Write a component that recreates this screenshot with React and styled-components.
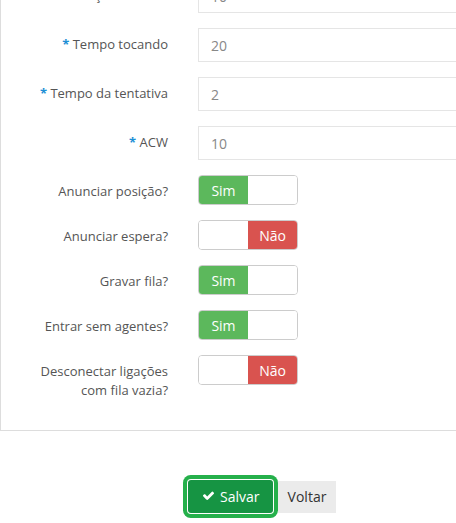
import React, { useState } from 'react';
import styled, { createGlobalStyle } from 'styled-components';

const GlobalStyle = createGlobalStyle`
  html, body {
    margin: 0;
    padding: 0;
    background: #fff;
    overflow: hidden;
    font-family: "Open Sans", "Noto Sans", sans-serif;
  }
`;

const fields = [
  { label: 'Posição máxima', value: '10' },
  { label: 'Tempo tocando', value: '20' },
  { label: 'Tempo da tentativa', value: '2' },
  { label: 'ACW', value: '10' },
];

const initialToggles = [
  { label: 'Anunciar posição?', on: true },
  { label: 'Anunciar espera?', on: false },
  { label: 'Gravar fila?', on: true },
  { label: 'Entrar sem agentes?', on: true },
  { label: 'Desconectar ligações com fila vazia?', on: false, wrap: true },
];

const App = () => {
  const [toggles, setToggles] = useState(initialToggles);

  const flip = (i) => {
    setToggles(toggles.map((t, idx) => (idx === i ? { ...t, on: !t.on } : t)));
  };

  return (
    <Page>
      <GlobalStyle />
      <Panel>
        {fields.map((f) => (
          <Row key={f.label}>
            <Label>
              <Req>*</Req> {f.label}
            </Label>
            <Input defaultValue={f.value} />
          </Row>
        ))}
        {toggles.map((t, i) => (
          <Row key={t.label}>
            <Label $wrap={t.wrap}>{t.label}</Label>
            <Toggle onClick={() => flip(i)}>
              <Half $kind={t.on ? 'sim' : 'off'}>{t.on ? 'Sim' : ''}</Half>
              <Half $kind={t.on ? 'off' : 'nao'}>{t.on ? '' : 'Não'}</Half>
            </Toggle>
          </Row>
        ))}
      </Panel>
      <Actions>
        <SaveButton>
          <svg width="13" height="11" viewBox="0 0 1792 1536" fill="#fff">
            <path d="M1671 310q0 40-28 68l-724 724-136 136q-28 28-68 28t-68-28l-136-136-362-362q-28-28-28-68t28-68l136-136q28-28 68-28t68 28l294 295 656-657q28-28 68-28t68 28l136 136q28 28 28 68z" />
          </svg>
          Salvar
        </SaveButton>
        <BackButton>Voltar</BackButton>
      </Actions>
    </Page>
  );
};

const Page = styled.div`
  width: 456px;
  height: 523px;
  overflow: hidden;
`;

const Panel = styled.div`
  width: 560px;
  margin-top: -37px;
  padding: 15px 0 15px;
  border: 1px solid #ddd;
  border-right: none;
`;

const Row = styled.div`
  display: grid;
  grid-template-columns: 167px 1fr;
  column-gap: 30px;
  align-items: start;
  margin-bottom: 15px;
`;

const Label = styled.label`
  text-align: right;
  padding-top: 7px;
  font-size: 13px;
  line-height: 19px;
  color: #555;
  ${(p) => p.$wrap && `padding-left: 32px;`}
`;

const Req = styled.span`
  color: #1e8fd5;
  font-weight: 700;
`;

const Input = styled.input`
  box-sizing: border-box;
  width: 320px;
  height: 34px;
  padding: 0 12px;
  border: 1px solid #e5e5e5;
  font-family: "Open Sans", "Noto Sans", sans-serif;
  font-size: 14px;
  color: #888;
  outline: none;
`;

const Toggle = styled.div`
  box-sizing: border-box;
  display: flex;
  width: 100px;
  height: 30px;
  border: 1px solid #ccc;
  border-radius: 4px;
  overflow: hidden;
  cursor: pointer;
`;

const colors = { sim: '#5cb85c', nao: '#d9534f', off: '#fff' };

const Half = styled.span`
  flex: 1;
  display: flex;
  align-items: center;
  justify-content: center;
  background: ${(p) => colors[p.$kind]};
  color: #fff;
  font-size: 14px;
  font-weight: 500;
`;

const Actions = styled.div`
  display: flex;
  align-items: center;
  padding-left: 188px;
  margin-top: 49px;
`;

const SaveButton = styled.button`
  box-sizing: border-box;
  display: flex;
  align-items: center;
  gap: 5px;
  width: 85px;
  height: 33px;
  padding: 0 0 0 14px;
  border: none;
  background: #169443;
  color: #fff;
  font-family: "Open Sans", "Noto Sans", sans-serif;
  font-size: 14px;
  box-shadow: 0 0 0 1px #fff, 0 0 0 5px #25b04b;
  border-radius: 3px;
`;

const BackButton = styled.button`
  box-sizing: border-box;
  width: 58px;
  height: 32px;
  margin-left: 5px;
  border: none;
  background: #ebebeb;
  color: #333;
  font-family: "Open Sans", "Noto Sans", sans-serif;
  font-size: 14px;
`;

export default App;
